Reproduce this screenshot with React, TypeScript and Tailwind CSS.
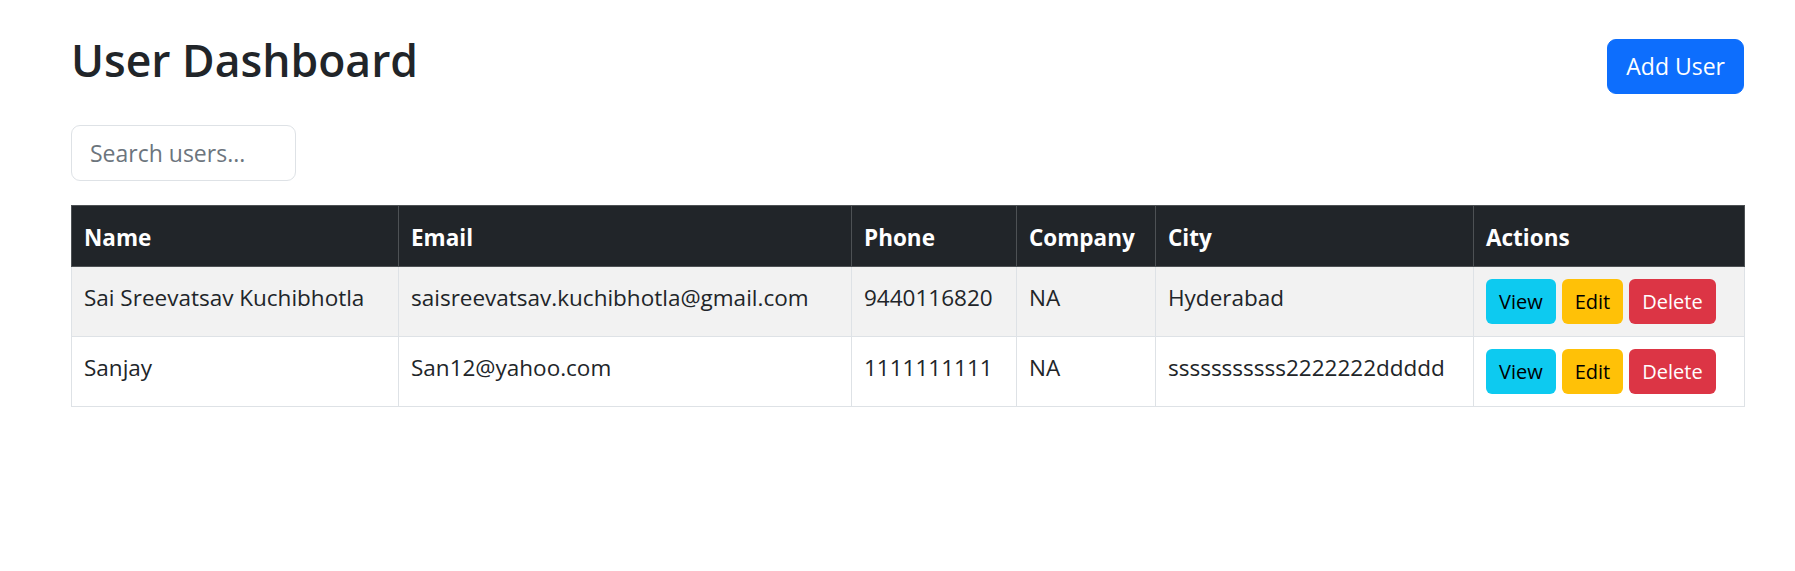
import { useState } from 'react';

type User = {
  id: number;
  name: string;
  email: string;
  phone: string;
  company: string;
  city: string;
};

const users: User[] = [
  {
    id: 1,
    name: 'Sai Sreevatsav Kuchibhotla',
    email: 'saisreevatsav.kuchibhotla@gmail.com',
    phone: '9440116820',
    company: 'NA',
    city: 'Hyderabad',
  },
  {
    id: 2,
    name: 'Sanjay',
    email: 'San12@yahoo.com',
    phone: '1111111111',
    company: 'NA',
    city: 'sssssssssss2222222ddddd',
  },
];

const columns = ['Name', 'Email', 'Phone', 'Company', 'City', 'Actions'];

// text cells sit a touch lower than the button cell
const cell = 'border border-[#dee2e6] px-[12px] pt-[13px] pb-[11px] align-top';

/**
 * App - user dashboard with search and a bordered, striped table
 */
export default function App() {
  const [query, setQuery] = useState('');

  const filtered = users.filter((u) =>
    [u.name, u.email, u.phone, u.company, u.city].some((v) =>
      v.toLowerCase().includes(query.toLowerCase())
    )
  );

  return (
    <div className="min-h-screen bg-white pl-[71px] pr-[51px] pt-[31px] font-['Open_Sans',sans-serif] text-[#212529]">
      {/* Header */}
      <div className="mb-[24px] flex items-center justify-between">
        <h2 className="mb-[12px] text-[44.5px] leading-[58px] font-semibold">User Dashboard</h2>
        <button className="h-[55px] rounded-[9px] border border-[#0d6efd] bg-[#0d6efd] px-[18px] text-[23px] leading-[34px] text-white">
          Add User
        </button>
      </div>

      {/* Search */}
      <input
        type="text"
        value={query}
        onChange={(e) => setQuery(e.target.value)}
        placeholder="Search users..."
        className="h-[56px] w-[225px] rounded-[9px] border border-[#dee2e6] px-[18px] text-[23px] outline-none placeholder:text-[#6c757d]"
      />

      {/* Table */}
      <table className="mt-[24px] w-[1673px] table-fixed border-collapse text-left text-[22.5px] leading-[36px]">
        <colgroup>
          <col className="w-[327px]" />
          <col className="w-[453px]" />
          <col className="w-[165px]" />
          <col className="w-[139px]" />
          <col className="w-[318px]" />
          <col className="w-[271px]" />
        </colgroup>
        <thead>
          <tr className="bg-[#212529] text-white">
            {columns.map((c) => (
              <th
                key={c}
                className="border border-[#4d5154] px-[12px] pt-[14px] pb-[10px] font-bold whitespace-nowrap"
              >
                {c}
              </th>
            ))}
          </tr>
        </thead>
        <tbody>
          {filtered.map((u, i) => (
            <tr key={u.id} className={i % 2 === 0 ? 'bg-[#f2f2f2]' : 'bg-white'}>
              <td className={`${cell} whitespace-nowrap`}>{u.name}</td>
              <td className={`${cell} whitespace-nowrap`}>{u.email}</td>
              <td className={cell}>{u.phone}</td>
              <td className={cell}>{u.company}</td>
              <td className={`${cell} whitespace-nowrap`}>{u.city}</td>
              <td className="border border-[#dee2e6] px-[12px] py-[12px] align-top">
                <div className="flex gap-[6px]">
                  <button className="h-[45px] rounded-[6px] bg-[#0dcaf0] px-[13px] text-[20px] text-black">View</button>
                  <button className="h-[45px] rounded-[6px] bg-[#ffc107] px-[13px] text-[20px] text-black">Edit</button>
                  <button className="h-[45px] rounded-[6px] bg-[#dc3545] px-[13px] text-[20px] text-white">Delete</button>
                </div>
              </td>
            </tr>
          ))}
        </tbody>
      </table>
    </div>
  );
}
